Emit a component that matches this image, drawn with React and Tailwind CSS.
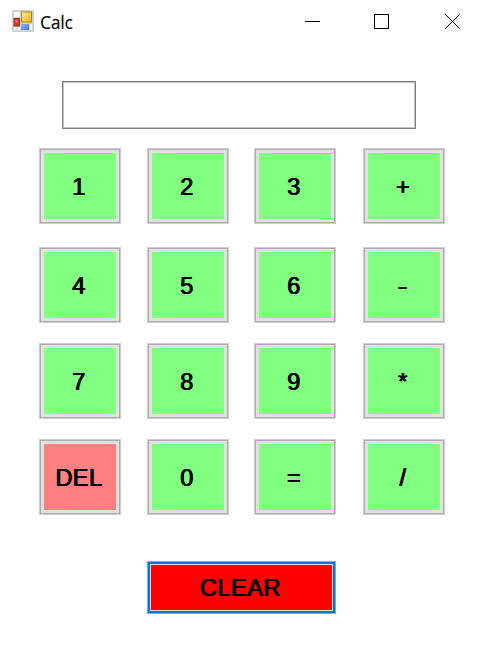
import React from "react";

const rows = [
  ["1", "2", "3", "+"],
  ["4", "5", "6", "-"],
  ["7", "8", "9", "*"],
  ["DEL", "0", "=", "/"],
];

const label =
  "font-['Liberation_Sans',Arial,sans-serif] text-[23.5px] leading-[24px] tracking-[0.5px] text-black [text-shadow:0.5px_0_0_#000,1px_0_0_#000]";

function AppIcon() {
  return (
    <svg width="22" height="22" viewBox="0 0 22 22" className="block">
      <defs>
        <linearGradient id="gold" x1="0" y1="0" x2="1" y2="1">
          <stop offset="0" stopColor="#fff0a0" />
          <stop offset="1" stopColor="#e9ad08" />
        </linearGradient>
        <linearGradient id="blue" x1="0" y1="0" x2="1" y2="1">
          <stop offset="0" stopColor="#92b8f5" />
          <stop offset="1" stopColor="#3f74d8" />
        </linearGradient>
      </defs>
      <rect width="22" height="22" fill="#d0d0d0" />
      <rect x="2" y="2" width="6" height="5" fill="#fff" />
      <rect x="2" y="17" width="3" height="3" fill="#f7f7f7" />
      <rect x="6" y="17" width="2" height="3" fill="#f7f7f7" />
      <rect x="18" y="14" width="2" height="6" fill="#f7f7f7" />
      <rect x="2" y="8.5" width="5.5" height="7.5" fill="#ce3c2b" stroke="#a82a20" />
      <rect x="3.5" y="10" width="2" height="2.5" fill="#ec8470" />
      <rect x="9.5" y="2" width="10" height="10" fill="url(#gold)" stroke="#b38210" />
      <rect x="9" y="14" width="8" height="6" fill="url(#blue)" />
    </svg>
  );
}

function Key({ text }) {
  const fill = text === "DEL" ? "bg-[#ff8080]" : "bg-[#80ff80]";
  return (
    <button className="block h-[76px] w-[82px] border border-[#cdcdcd] bg-[#e1e1e1]">
      <span className="block h-full border border-[#adadad] p-[3px]">
        <span className={`flex h-full items-center justify-center pr-[3px] pt-px ${fill} ${label}`}>
          <span className={text === "-" ? "inline-block scale-x-125" : ""}>{text}</span>
        </span>
      </span>
    </button>
  );
}

export default function App() {
  return (
    <main className="h-[655px] w-[485px] overflow-hidden bg-white">
      <header className="flex h-[81px] items-start pl-[12px] pt-[10px]">
        <AppIcon />
        <h1 className="ml-[6px] w-[100px] font-['Noto_Sans','Open_Sans',sans-serif] text-[17.5px] leading-[24px] tracking-[-0.3px] text-black">
          Calc
        </h1>
        <div className="ml-[165px] mt-[4px] flex gap-[54px]">
          <svg width="15" height="15" shapeRendering="crispEdges">
            <path d="M0 7.5H15" stroke="#000" />
          </svg>
          <svg width="15" height="15" shapeRendering="crispEdges">
            <rect x=".5" y=".5" width="14" height="14" fill="none" stroke="#000" />
          </svg>
          <svg width="15" height="15" className="ml-[2px]">
            <path d="M.3.3 14.7 14.7M14.7.3.3 14.7" stroke="#000" strokeWidth="1" />
          </svg>
        </div>
      </header>
      <div className="ml-[62px] h-[48px] w-[354px] border border-[#7f7f7f] bg-white shadow-[inset_0_0_0_1px_#c4c4c4]" />
      <section className="mt-[19px] flex flex-col pl-[39px]">
        {rows.map((row, i) => (
          <div
            key={i}
            className={`grid grid-cols-[108px_107px_109px_82px] ${i === 0 ? "" : i === 1 ? "mt-[23px]" : "mt-[20px]"}`}
          >
            {row.map((text) => (
              <Key key={text} text={text} />
            ))}
          </div>
        ))}
      </section>
      <button className="ml-[147px] mt-[46px] block h-[53px] w-[189px] border border-[#6bb0e9] bg-[#e1e1e1]">
        <span className="block h-full border-[2px] border-[#0078d7] p-px">
          <span className={`flex h-full items-center justify-center bg-[#ff0000] pr-[3px] ${label}`}>
            CLEAR
          </span>
        </span>
      </button>
    </main>
  );
}
